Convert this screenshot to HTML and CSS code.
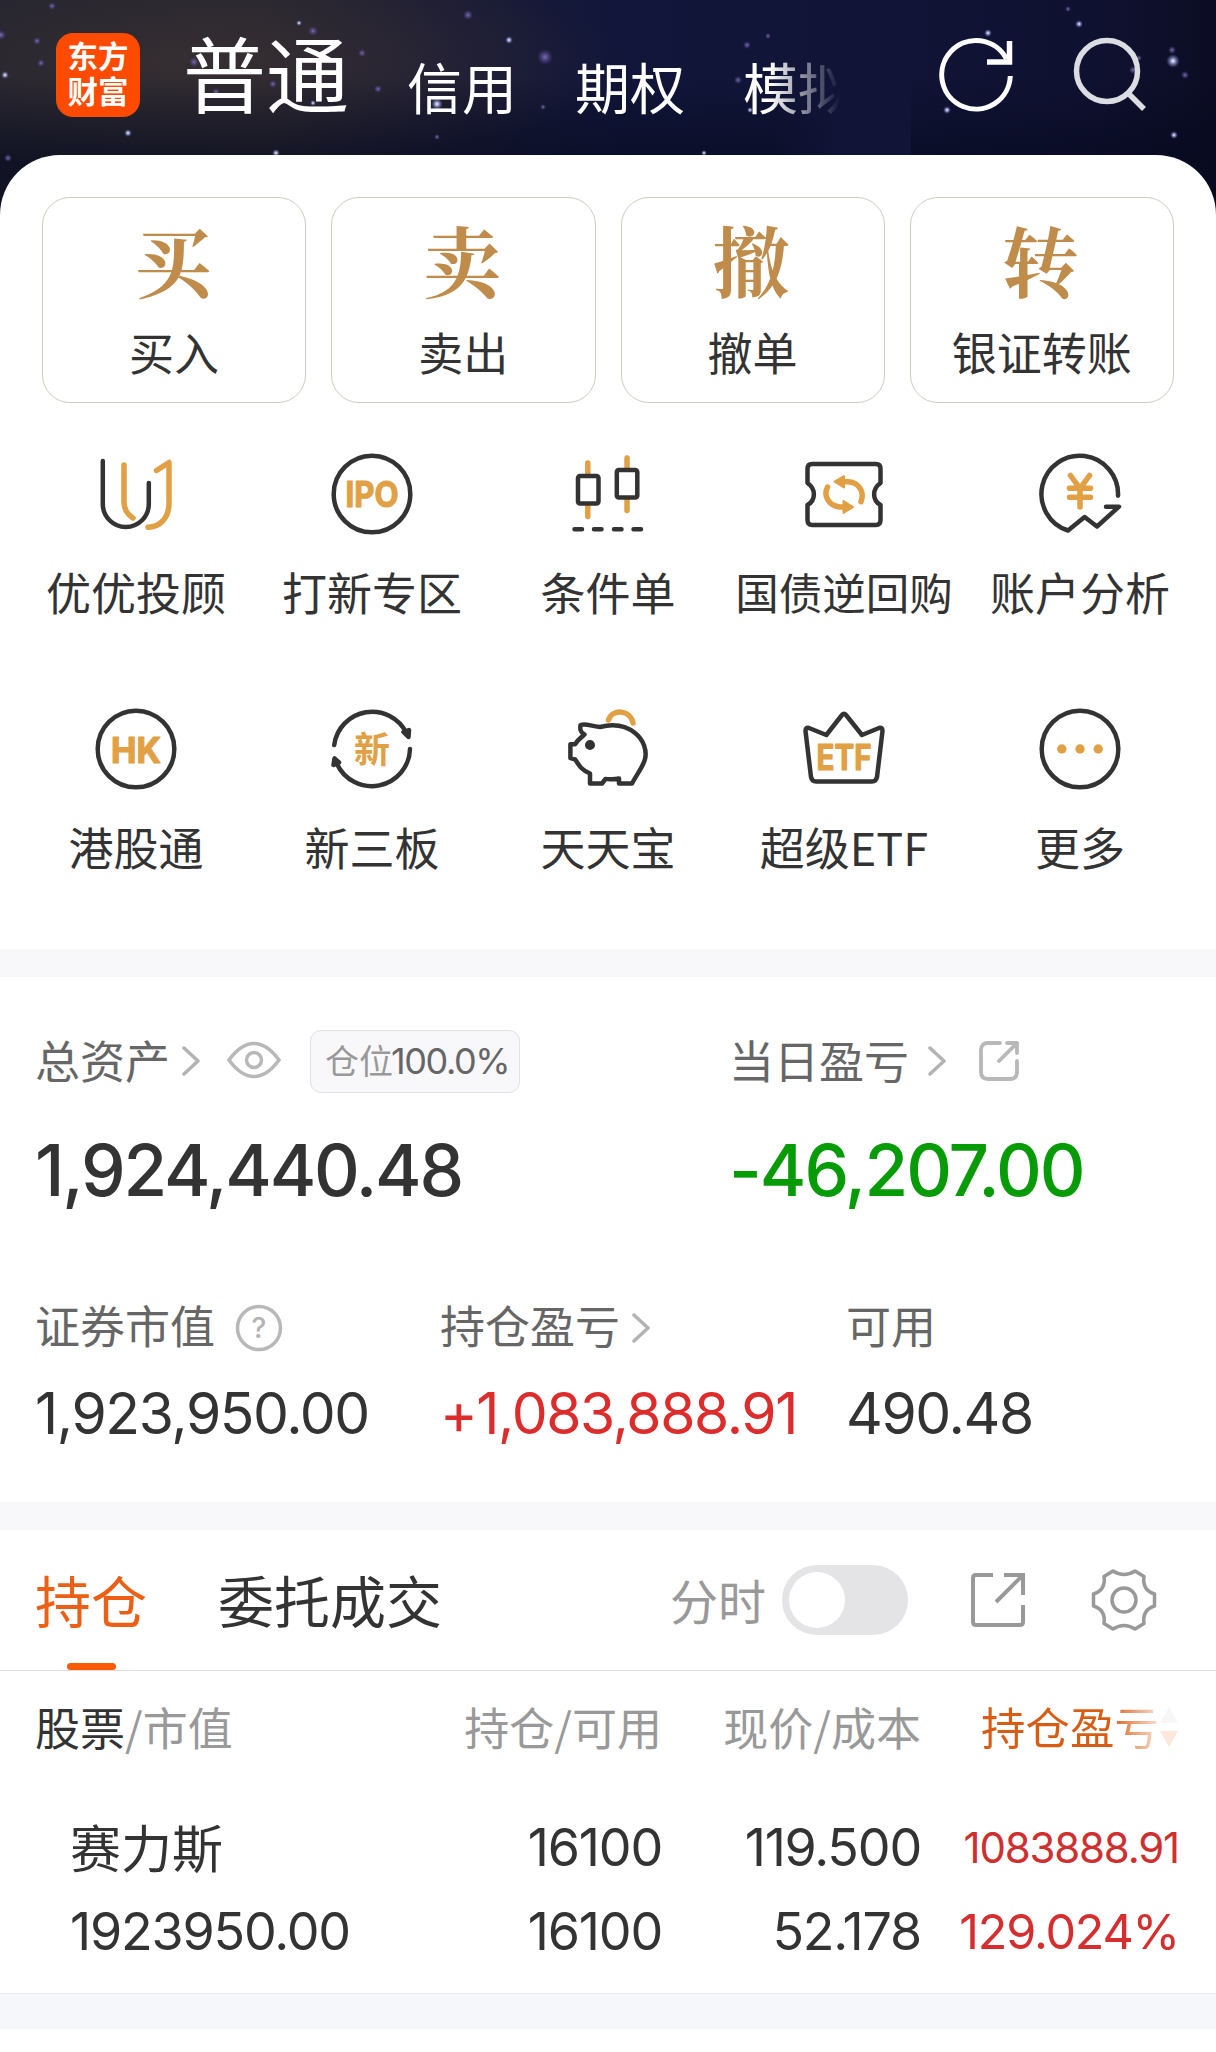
FILE: index.html
```html
<!DOCTYPE html>
<html lang="zh-CN">
<head>
<meta charset="utf-8">
<title>东方财富 - 交易</title>
<link rel="stylesheet" href="styles.css">
</head>
<body>
<header class="top">
  <svg class="sky" viewBox="0 0 1216 220" aria-hidden="true">
    <defs>
      <radialGradient id="glow"><stop offset="0" stop-color="#fff"/><stop offset=".35" stop-color="#aab4e8" stop-opacity=".8"/><stop offset="1" stop-color="#5560a8" stop-opacity="0"/></radialGradient>
      <radialGradient id="violet"><stop offset="0" stop-color="#8a78bc" stop-opacity=".9"/><stop offset=".4" stop-color="#5d5298" stop-opacity=".7"/><stop offset="1" stop-color="#4a4080" stop-opacity="0"/></radialGradient>
    </defs>
    <g fill="url(#glow)">
      <circle cx="5" cy="75" r="4"/><circle cx="128" cy="133" r="4"/><circle cx="276" cy="153" r="4"/><circle cx="509" cy="40" r="4"/><circle cx="437" cy="104" r="6"/><circle cx="299" cy="23" r="3"/><circle cx="313" cy="103" r="3"/><circle cx="988" cy="33" r="4"/><circle cx="1079" cy="24" r="4"/><circle cx="1173" cy="61" r="7"/><circle cx="1174" cy="135" r="4"/><circle cx="947" cy="110" r="4"/><circle cx="750" cy="110" r="3"/><circle cx="704" cy="153" r="3"/>
    </g>
    <g fill="url(#violet)">
      <circle cx="545" cy="57" r="8"/><circle cx="313" cy="31" r="5"/><circle cx="194" cy="62" r="5"/><circle cx="362" cy="53" r="4"/><circle cx="216" cy="92" r="4"/><circle cx="52" cy="6" r="4"/><circle cx="37" cy="41" r="4"/><circle cx="41" cy="63" r="4"/><circle cx="1" cy="35" r="5"/><circle cx="378" cy="89" r="4"/><circle cx="273" cy="84" r="4"/><circle cx="468" cy="15" r="5"/><circle cx="543" cy="107" r="3"/><circle cx="437" cy="137" r="3"/><circle cx="747" cy="45" r="4"/><circle cx="768" cy="36" r="3"/><circle cx="738" cy="80" r="4"/><circle cx="1172" cy="50" r="4"/><circle cx="1185" cy="75" r="4"/><circle cx="1139" cy="58" r="3"/><circle cx="1068" cy="9" r="3"/><circle cx="1133" cy="70" r="4"/><circle cx="8" cy="158" r="4"/>
    </g>
  </svg>
  <div class="logo"><span>东方</span><span>财富</span></div>
  <nav class="modes">
    <span class="mode mode-active">普通</span>
    <span class="mode">信用</span>
    <span class="mode">期权</span>
    <span class="mode">模拟</span>
  </nav>
  <svg class="top-icon refresh" viewBox="0 0 76 76"><path d="M67.500 22A34.300 34.300 0 1 0 71.300 39" fill="none" stroke="#fff" stroke-width="5"/><path d="M48 25H70.500V4" fill="none" stroke="#fff" stroke-width="5.500"/></svg>
  <svg class="top-icon search" viewBox="0 0 76 76"><circle cx="34" cy="34" r="30.500" fill="none" stroke="#dcdce3" stroke-width="5.500"/><path d="M55 56L71 72" stroke="#dcdce3" stroke-width="5.500"/></svg>
</header>

<main class="sheet">
  <section class="trade">
    <div class="trade-card"><b>买</b><span>买入</span></div>
    <div class="trade-card"><b>卖</b><span>卖出</span></div>
    <div class="trade-card"><b>撤</b><span>撤单</span></div>
    <div class="trade-card"><b>转</b><span>银证转账</span></div>
  </section>

  <section class="services">
    <div class="service">
      <svg class="ico" viewBox="-42 -42 84 84"><path d="M-33.200 -33V10a23 23 0 0 0 46 0V-11"/><g class="o"><path d="M-12 -29V8C-12 15-8 21-3 24M20.500 -23.500L33 -31.500V9C33 24 24 33 12 33.300"/></g></svg>
      <span>优优投顾</span></div>
    <div class="service">
      <svg class="ico" viewBox="-42 -42 84 84"><circle r="38.300"/><text x="-26.500" y="13" textLength="53" lengthAdjust="spacingAndGlyphs">IPO</text></svg>
      <span>打新专区</span></div>
    <div class="service">
      <svg class="ico" viewBox="-42 -42 84 84"><g class="o"><path d="M-20.200 -31V-20M-20.200 12V22.500M19 -36V-26M19 6V16.500"/></g><rect x="-30" y="-18" width="20.500" height="27.500" rx="2"/><rect x="8.800" y="-24" width="20.500" height="27.500" rx="2"/><path d="M-33.500 35.300H-26M-14 35.300H-6.500M6 35.300H13.500M25.500 35.300H33"/></svg>
      <span>条件单</span></div>
    <div class="service">
      <svg class="ico" viewBox="-42 -42 84 84"><path d="M-32 -30H32Q36.500 -30 36.500 -25V-11C28 -5 28 6 36.500 11V26Q36.500 31 32 31H-32Q-36.500 31-36.500 26V11C-28 6-28-5-36.500 -11V-25Q-36.500 -30-32 -30Z"/><g class="o"><path d="M0 -12.300H4C14-12 21-3 17 7.700M0 13H-4C-15 12-21 2-16.500 -7"/><path class="f" d="M-9.500 -12.300L0 -18V-6.500ZM9 13L-.5 7V19Z"/></g></svg>
      <span class="tight">国债逆回购</span></div>
    <div class="service">
      <svg class="ico" viewBox="-42 -42 84 84"><path d="M38 1.700A38.300 38.300 0 1 0 -12 36.500L4.600 23L17 32.500L39 12.700H26"/><g class="o"><path d="M-9.500 -18.500L0 -5.500L9.500 -18.500M0 -5V13M-10.500 -5.800H10.500M-10.500 3.200H10.500"/></g></svg>
      <span>账户分析</span></div>
    <div class="service">
      <svg class="ico" viewBox="-42 -42 84 84"><circle r="38.300"/><text x="-25" y="13.500" textLength="50" lengthAdjust="spacingAndGlyphs">HK</text></svg>
      <span>港股通</span></div>
    <div class="service">
      <svg class="ico" viewBox="-42 -42 84 84"><path d="M-37.800 -4A38.300 38.300 0 0 1 34.500 -16M38 0A38.300 38.300 0 0 1 -35 15"/><path class="k" d="M36.500 -12L31.500 -17L37 -19ZM-37.500 9.500L-38.500 16L-33 13.500Z"/><text class="cjk" x="-18" y="13.500">新</text></svg>
      <span>新三板</span></div>
    <div class="service">
      <svg class="ico" viewBox="-42 -42 84 84"><path d="M-27.500 -24C-22-26-18-23-8-22C12-27 22-20 27-16C36-9 39 2 37 10C35 18 29 25 24 34.500H11V29.500C5 31 0 30-2.500 30L-6 34.500H-18V24.500C-26 21-28 18-33 10.300L-37.600 9V-4.700H-33C-30-10-27-11-23.500 -14.500C-28-17-28-20-27.500 -24Z"/><circle class="k" cx="-18" cy="-4" r="2.800"/><g class="o"><path d="M.5 -29C4-40 22-40 25 -26"/></g></svg>
      <span>天天宝</span></div>
    <div class="service">
      <svg class="ico" viewBox="-42 -42 84 84"><path d="M-35 -21L-17.700 -14L-2 -34Q0 -36.500 2 -34L18 -14L35 -21Q38.500 -22 38.500 -18L33 28Q32 32.500 28 32.500H-28Q-32 32.500-33 28L-38.500 -18Q-38.500 -22-35 -21Z"/><text x="-27.500" y="20.500" textLength="55" lengthAdjust="spacingAndGlyphs">ETF</text></svg>
      <span>超级ETF</span></div>
    <div class="service">
      <svg class="ico" viewBox="-42 -42 84 84"><circle r="38.300"/><g class="dots"><circle cx="-18.200" r="4.700"/><circle r="4.700"/><circle cx="18.200" r="4.700"/></g></svg>
      <span>更多</span></div>
  </section>
</main>

<section class="assets">
  <div class="summary">
    <div class="total">
      <div class="label"><span>总资产</span>
        <svg class="chev" viewBox="0 0 18 30"><path d="M2 2L16 15L2 28"/></svg>
        <svg class="eye" viewBox="0 0 54 38"><path d="M2 19C18-3 36-3 52 19C36 41 18 41 2 19Z"/><circle cx="27" cy="19" r="7.500"/></svg>
        <div class="badge"><span>仓位</span><i class="n n-badge">100.0%</i></div>
      </div>
      <div class="n n-total">1,924,440.48</div>
    </div>
    <div class="today">
      <div class="label"><span>当日盈亏</span>
        <svg class="chev" viewBox="0 0 18 30"><path d="M2 2L16 15L2 28"/></svg>
        <svg class="share" viewBox="0 0 40 40"><path d="M21 2H9Q2 2 2 9V31Q2 38 9 38H31Q38 38 38 31V20M28 2H38V12M38 2L20 20"/></svg>
      </div>
      <div class="n n-today">-46,207.00</div>
    </div>
  </div>
  <div class="details">
    <div>
      <div class="label"><span>证券市值</span>
        <svg class="help" viewBox="0 0 48 48"><circle cx="24" cy="24" r="21.500"/><text x="24" y="34" text-anchor="middle">?</text></svg>
      </div>
      <div class="n n-market">1,923,950.00</div>
    </div>
    <div>
      <div class="label"><span>持仓盈亏</span>
        <svg class="chev" viewBox="0 0 18 30"><path d="M2 2L16 15L2 28"/></svg>
      </div>
      <div class="n n-profit">+1,083,888.91</div>
    </div>
    <div>
      <div class="label"><span>可用</span></div>
      <div class="n n-cash">490.48</div>
    </div>
  </div>
</section>

<section class="holdings">
  <div class="tabs">
    <span class="tab tab-active">持仓</span>
    <span class="tab">委托成交</span>
    <span class="minute">分时</span>
    <span class="toggle"></span>
    <svg class="open" viewBox="0 0 56 56"><path d="M23 3H6Q3 3 3 6V50Q3 53 6 53H50Q53 53 53 50V33M34 3H53V23M53 3L26 30"/></svg>
    <svg class="gear" viewBox="-33 -33 66 66"><circle r="12"/><path d="M-11 -29Q0 -22 11 -29L20 -23.500Q18 -10 30.500 -6V6Q18 10 20 23.500L11 29Q0 22 -11 29L-20 23.500Q-18 10 -30.500 6V-6Q-18 -10 -20 -23.500Z"/></svg>
  </div>
  <div class="row head">
    <span><em>股票</em>/市值</span>
    <span>持仓/可用</span>
    <span>现价/成本</span>
    <span class="sort">持仓盈亏<svg viewBox="0 0 20 42"><path d="M10 1L19 17H1Z" fill="#f7f7f7"/><path d="M1 25H19L10 41Z" fill="#fde7dd"/></svg></span>
  </div>
  <div class="row first">
    <span class="name">赛力斯</span>
    <span class="n">16100</span>
    <span class="n">119.500</span>
    <span class="n n-gain">1083888.91</span>
  </div>
  <div class="row second">
    <span class="name n">1923950.00</span>
    <span class="n">16100</span>
    <span class="n">52.178</span>
    <span class="n n-rate">129.024%</span>
  </div>
</section>
<footer class="foot"></footer>
</body>
</html>
```
FILE: styles.css
```css
* { box-sizing: border-box; }
body {
  margin: 0;
  width: 1216px;
  height: 2052px;
  overflow: hidden;
  background: #fff;
  color: #333;
  font-family: "Noto Sans CJK SC", sans-serif;
  font-size: 45px;
  line-height: 1;
}
svg { flex: none; display: block; }

.top {
  position: relative;
  height: 220px;
  display: flex;
  align-items: flex-start;
  padding-left: 56px;
  background:
    linear-gradient(180deg, transparent 35%, rgba(5, 8, 28, .6) 75%),
    radial-gradient(ellipse 420px 110px at 200px 60px, rgba(64, 52, 52, .6), transparent),
    linear-gradient(90deg, #22232f 0, #26252f 260px, #1a1b35 460px, #11163a 620px, #111436 900px, #0f1130 1100px, #0c0d24 1216px);
}
.sky { position: absolute; inset: 0; width: 1216px; height: 220px; }
.logo {
  position: relative;
  width: 84px;
  height: 84px;
  margin-top: 33px;
  border-radius: 17px;
  background: #ff4a02;
  color: #fff;
  font-size: 30.500px;
  font-weight: 700;
  line-height: 35px;
  padding-top: 5px;
  display: flex;
  flex-direction: column;
  align-items: center;
}
.modes {
  position: relative;
  width: 728px;
  height: 155px;
  margin-left: 43px;
  display: flex;
  gap: 58px;
  overflow: hidden;
  white-space: nowrap;
  color: #fff;
}
.modes::after {
  content: "";
  position: absolute;
  right: 0;
  top: 0;
  width: 141px;
  height: 155px;
  background: linear-gradient(90deg, rgba(17, 20, 54, 0), #111436 70px);
}
.mode { font-size: 55px; line-height: 55px; padding-top: 58px; }
.mode-active { font-size: 83px; line-height: 83px; padding-top: 30px; }
.top-icon { position: relative; width: 76px; height: 76px; margin-top: 37px; }
.refresh { margin-left: 28px; }
.search { margin-left: 58px; }

.sheet {
  position: relative;
  height: 794px;
  margin-top: -65px;
  padding-top: 42px;
  border-radius: 60px 60px 0 0;
  background: #fff;
}
.trade {
  display: grid;
  grid-template-columns: repeat(4, 1fr);
  gap: 25px;
  padding: 0 42px;
}
.trade-card {
  height: 206px;
  padding-top: 24px;
  border: 1px solid #d0cabf;
  border-radius: 28px;
  display: flex;
  flex-direction: column;
  align-items: center;
}
.trade-card b {
  color: #bf8c4b;
  font-family: "Noto Serif CJK SC", "Noto Sans CJK SC", serif;
  font-size: 77px;
  font-weight: 700;
  line-height: 74px;
  margin: 0 3px 33px 0;
}
.services {
  display: grid;
  grid-template-columns: repeat(5, 236px);
  grid-auto-rows: 255px;
  justify-content: center;
  padding-top: 49px;
}
.service {
  display: flex;
  flex-direction: column;
  align-items: center;
  gap: 33px;
  white-space: nowrap;
}
.tight { font-size: 43.500px; line-height: 45px; }
.ico { width: 84px; height: 84px; fill: none; stroke: #333; stroke-width: 4.500; stroke-linecap: round; stroke-linejoin: round; }
.ico .o { stroke: #e2a045; stroke-width: 5.500; }
.ico .f { fill: #e2a045; stroke-width: 2; }
.ico .k { fill: #333; }
.ico .dots { fill: #e2a045; stroke: none; }
.ico text { fill: #e2a045; stroke: #e2a045; stroke-width: 1.200; font: 700 35px Inter, sans-serif; }
.ico .cjk { font: 700 36px "Noto Sans CJK SC", sans-serif; stroke: none; }

.n { font-family: Inter, sans-serif; font-style: normal; white-space: nowrap; }

.assets { height: 581px; border: solid #f8f8fb; border-width: 28px 0; }
.summary { display: flex; height: 288px; padding: 61px 0 0 35px; }
.total { width: 694px; }
.label { display: flex; align-items: center; height: 46px; color: #666; }
.summary .label > span { margin-bottom: 4px; }
.details .label > span { margin-bottom: 8px; }
.chev { width: 18px; height: 30px; margin-left: 12px; fill: none; stroke: #b3b3b3; stroke-width: 3.500; stroke-linecap: round; stroke-linejoin: round; }
.eye { width: 54px; height: 38px; margin: 0 0 3px 27px; fill: none; stroke: #b8b8b8; stroke-width: 3.500; }
.badge {
  height: 63px;
  width: 210px;
  margin-left: 29px;
  padding-left: 14px;
  display: flex;
  align-items: center;
  border: 1px solid #e2e2e5;
  border-radius: 11px;
  background: #f8f8fb;
  color: #999;
  font-size: 34px;
}
.badge span { margin: 0 -2px 2px 0; }
.n-badge { font-size: 36px; color: #666; letter-spacing: -1.400px; }
.n-total, .n-today { font-size: 71px; font-weight: 500; line-height: 86px; letter-spacing: -2.200px; }
.n-today { color: #079c07; letter-spacing: -2px; }
.summary .label { margin-bottom: 43px; }
.today .chev { margin-left: 19px; }
.share { width: 40px; height: 40px; margin-left: 33px; fill: none; stroke: #b8b8b8; stroke-width: 3.800; stroke-linecap: round; stroke-linejoin: round; }
.details { display: grid; grid-template-columns: 405px 406px 1fr; padding: 40px 0 0 35px; }
.details .label { margin-bottom: 28px; }
.details .n { font-size: 57px; line-height: 70px; letter-spacing: -1.400px; }
.help { width: 48px; height: 48px; margin-left: 20px; }
.help circle { fill: none; stroke: #b8b8b8; stroke-width: 3.500; }
.help text { fill: #b3b3b3; font: 500 28px Inter, sans-serif; }
.n-profit { color: #dd2c2c; }

.tabs {
  display: flex;
  align-items: center;
  height: 141px;
  padding-left: 35px;
  border-bottom: 1px solid #dcdcde;
}
.tab { position: relative; font-size: 56px; margin: 0 71px 3px 0; }
.tab-active { color: #ec5f14; }
.tab-active::after {
  content: "";
  position: absolute;
  left: 32px;
  bottom: -43px;
  width: 49px;
  height: 7px;
  border-radius: 3.500px;
  background: #fb5a05;
}
.minute { margin: 0 0 3px 157px; font-size: 48px; color: #999; }
.toggle { width: 126px; height: 70px; margin-left: 16px; padding: 7px; border-radius: 35px; background: #e4e4e6; }
.toggle::before { content: ""; display: block; width: 56px; height: 56px; border-radius: 50%; background: #fff; }
.open { width: 56px; height: 56px; margin-left: 62px; fill: none; stroke: #999; stroke-width: 4; }
.gear { width: 66px; height: 66px; margin-left: 65px; fill: none; stroke: #999; stroke-width: 3.500; stroke-linejoin: round; }

.row { display: grid; grid-template-columns: 352px 275px 259px 258px; padding-left: 35px; align-items: center; white-space: nowrap; }
.row > span { text-align: right; }
.row > span:first-child { text-align: left; }
.head { height: 119px; padding-bottom: 8px; color: #999; }
.head em { font-style: normal; color: #333; }
.row > .sort {
  display: flex;
  justify-content: flex-end;
  align-items: center;
  color: transparent;
  font-size: 44.500px;
  background: linear-gradient(90deg, #d85d14 0, #d85d14 188px, #fff 250px);
  -webkit-background-clip: text;
  background-clip: text;
}
.sort svg { width: 20px; height: 42px; }
.row > .name { padding-left: 35px; }
.first { height: 116px; }
.first .name { font-size: 51px; padding-bottom: 3px; }
.second { height: 87px; padding-bottom: 35px; }
.row .n { font-size: 52px; letter-spacing: -1.200px; }
.row .n-gain { font-size: 42px; color: #cf2f2f; }
.row .n-rate { font-size: 48.500px; color: #d62e2e; }
.foot { height: 36px; background: #f6f7fa; border-top: 1px solid #e6e8ec; }
```
